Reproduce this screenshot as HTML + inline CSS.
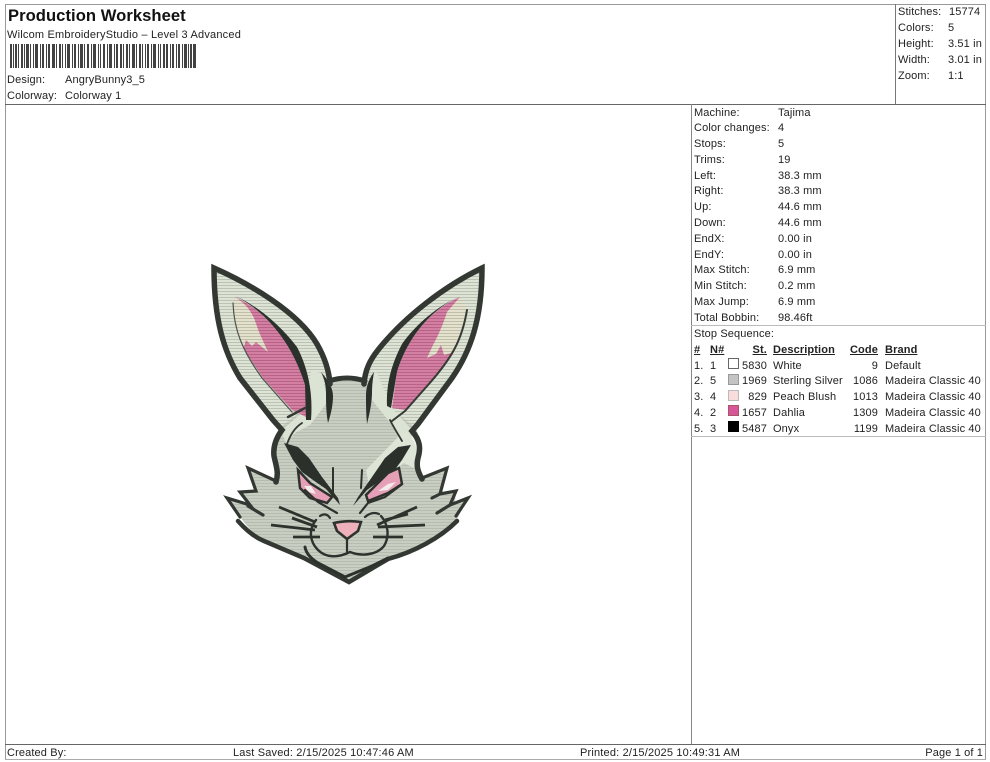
<!DOCTYPE html>
<html><head><meta charset="utf-8"><style>
html,body{margin:0;padding:0;background:#fff}
#p{position:relative;width:990px;height:762px;overflow:hidden;background:#fff;font:11px "Liberation Sans",Arial,sans-serif;color:#222}
#p span{position:absolute;white-space:nowrap;line-height:14px;letter-spacing:.13px;margin-top:1px}
.l{position:absolute;background:#777}
.b{font-weight:bold;text-decoration:underline}
.r{text-align:right}
.s{position:absolute;width:9px;height:9px;border:1px solid #666}
</style></head><body><div id="p">
<div class="l" style="left:5px;top:4px;width:980px;height:1px;background:#999"></div>
<div class="l" style="left:5px;top:4px;width:1px;height:755px;background:#999"></div>
<div class="l" style="left:985px;top:4px;width:1px;height:755px;background:#999"></div>
<div class="l" style="left:5px;top:104px;width:981px;height:1px;background:#666"></div>
<div class="l" style="left:895px;top:4px;width:1px;height:100px"></div>
<div class="l" style="left:691px;top:104px;width:1px;height:641px;background:#888"></div>
<div class="l" style="left:691px;top:325px;width:295px;height:1px;background:#bbb"></div>
<div class="l" style="left:691px;top:436px;width:295px;height:1px;background:#bbb"></div>
<div class="l" style="left:5px;top:744px;width:981px;height:1px;background:#666"></div>
<div class="l" style="left:5px;top:759px;width:981px;height:1px;background:#aaa"></div>

<span style="left:8px;top:6px;font-size:16.6px;font-weight:bold;line-height:18px;color:#111;letter-spacing:.05px">Production Worksheet</span>
<span style="left:7px;top:27px;letter-spacing:.2px">Wilcom EmbroideryStudio – Level 3 Advanced</span>
<svg style="position:absolute;left:10px;top:44px;opacity:.85" width="186" height="24"><g fill="#222">
<path d="M0 0h2v24H0zM3 0h1v24H3zM5 0h2v24H5zM8 0h1v24H8zM11 0h2v24h-2zM14 0h1v24h-1zM16 0h3v24h-3zM20 0h1v24h-1zM23 0h1v24h-1zM25 0h3v24h-3zM30 0h1v24h-1zM32 0h2v24h-2zM36 0h1v24h-1zM38 0h2v24h-2zM42 0h3v24h-3zM46 0h1v24h-1zM49 0h2v24h-2zM52 0h1v24h-1zM55 0h1v24h-1zM57 0h3v24h-3zM62 0h1v24h-1zM64 0h2v24h-2zM68 0h1v24h-1zM70 0h3v24h-3zM74 0h1v24h-1zM77 0h2v24h-2zM81 0h1v24h-1zM83 0h3v24h-3zM88 0h1v24h-1zM90 0h1v24h-1zM93 0h2v24h-2zM97 0h1v24h-1zM99 0h3v24h-3zM104 0h1v24h-1zM106 0h2v24h-2zM110 0h2v24h-2zM113 0h1v24h-1zM116 0h2v24h-2zM119 0h1v24h-1zM122 0h3v24h-3zM126 0h1v24h-1zM129 0h2v24h-2zM132 0h1v24h-1zM135 0h1v24h-1zM137 0h2v24h-2zM141 0h1v24h-1zM143 0h3v24h-3zM148 0h1v24h-1zM150 0h1v24h-1zM153 0h2v24h-2zM156 0h2v24h-2zM160 0h1v24h-1zM162 0h2v24h-2zM166 0h1v24h-1zM168 0h2v24h-2zM172 0h1v24h-1zM174 0h3v24h-3zM178 0h1v24h-1zM180 0h2v24h-2zM183 0h3v24h-3z"/></g></svg>
<span style="left:7px;top:72px">Design:</span><span style="left:65px;top:72px">AngryBunny3_5</span>
<span style="left:7px;top:88px">Colorway:</span><span style="left:65px;top:88px">Colorway 1</span>

<span style="left:898px;top:4px">Stitches:</span><span style="left:949px;top:4px">15774</span>
<span style="left:898px;top:20px">Colors:</span><span style="left:948px;top:20px">5</span>
<span style="left:898px;top:36px">Height:</span><span style="left:948px;top:36px">3.51 in</span>
<span style="left:898px;top:52px">Width:</span><span style="left:948px;top:52px">3.01 in</span>
<span style="left:898px;top:68px">Zoom:</span><span style="left:948px;top:68px">1:1</span>

<span style="left:694px;top:105px">Machine:</span><span style="left:778px;top:105px">Tajima</span>
<span style="left:694px;top:120px">Color changes:</span><span style="left:778px;top:120px">4</span>
<span style="left:694px;top:136px">Stops:</span><span style="left:778px;top:136px">5</span>
<span style="left:694px;top:152px">Trims:</span><span style="left:778px;top:152px">19</span>
<span style="left:694px;top:168px">Left:</span><span style="left:778px;top:168px">38.3 mm</span>
<span style="left:694px;top:183px">Right:</span><span style="left:778px;top:183px">38.3 mm</span>
<span style="left:694px;top:199px">Up:</span><span style="left:778px;top:199px">44.6 mm</span>
<span style="left:694px;top:215px">Down:</span><span style="left:778px;top:215px">44.6 mm</span>
<span style="left:694px;top:231px">EndX:</span><span style="left:778px;top:231px">0.00 in</span>
<span style="left:694px;top:247px">EndY:</span><span style="left:778px;top:247px">0.00 in</span>
<span style="left:694px;top:262px">Max Stitch:</span><span style="left:778px;top:262px">6.9 mm</span>
<span style="left:694px;top:278px">Min Stitch:</span><span style="left:778px;top:278px">0.2 mm</span>
<span style="left:694px;top:294px">Max Jump:</span><span style="left:778px;top:294px">6.9 mm</span>
<span style="left:694px;top:310px">Total Bobbin:</span><span style="left:778px;top:310px">98.46ft</span>
<span style="left:694px;top:326px">Stop Sequence:</span>

<span class="b" style="left:694px;top:342px">#</span><span class="b" style="left:710px;top:342px">N#</span><span class="b r" style="right:223px;top:342px">St.</span><span class="b" style="left:773px;top:342px">Description</span><span class="b r" style="right:112px;top:342px">Code</span><span class="b" style="left:885px;top:342px">Brand</span>

<span style="left:694px;top:358px">1.</span><span style="left:710px;top:358px">1</span><i class="s" style="left:728px;top:358px;background:#fff"></i><span class="r" style="right:223px;top:358px">5830</span><span style="left:773px;top:358px">White</span><span class="r" style="right:112px;top:358px">9</span><span style="left:885px;top:358px">Default</span>
<span style="left:694px;top:373px">2.</span><span style="left:710px;top:373px">5</span><i class="s" style="left:728px;top:374px;background:#c4c4c4;border-color:#999"></i><span class="r" style="right:223px;top:373px">1969</span><span style="left:773px;top:373px">Sterling Silver</span><span class="r" style="right:112px;top:373px">1086</span><span style="left:885px;top:373px">Madeira Classic 40</span>
<span style="left:694px;top:389px">3.</span><span style="left:710px;top:389px">4</span><i class="s" style="left:728px;top:390px;background:#fbdcdc;border-color:#bbb"></i><span class="r" style="right:223px;top:389px">829</span><span style="left:773px;top:389px">Peach Blush</span><span class="r" style="right:112px;top:389px">1013</span><span style="left:885px;top:389px">Madeira Classic 40</span>
<span style="left:694px;top:405px">4.</span><span style="left:710px;top:405px">2</span><i class="s" style="left:728px;top:405px;background:#d9559a;border-color:#a56"></i><span class="r" style="right:223px;top:405px">1657</span><span style="left:773px;top:405px">Dahlia</span><span class="r" style="right:112px;top:405px">1309</span><span style="left:885px;top:405px">Madeira Classic 40</span>
<span style="left:694px;top:421px">5.</span><span style="left:710px;top:421px">3</span><i class="s" style="left:728px;top:421px;background:#000;border-color:#000"></i><span class="r" style="right:223px;top:421px">5487</span><span style="left:773px;top:421px">Onyx</span><span class="r" style="right:112px;top:421px">1199</span><span style="left:885px;top:421px">Madeira Classic 40</span>

<span style="left:7px;top:745px">Created By:</span>
<span style="left:233px;top:745px;letter-spacing:.18px">Last Saved: 2/15/2025 10:47:46 AM</span>
<span style="left:580px;top:745px;letter-spacing:.18px">Printed: 2/15/2025 10:49:31 AM</span>
<span class="r" style="right:7px;top:745px">Page 1 of 1</span>

<svg style="position:absolute;left:0;top:0;filter:blur(.35px)" width="990" height="762" viewBox="0 0 990 762">
<defs>
<pattern id="st" width="4" height="3" patternUnits="userSpaceOnUse"><rect width="4" height="3" fill="#c8cec2"/><rect width="4" height="1" fill="#b6bdb0"/></pattern>
<pattern id="lt" width="4" height="3" patternUnits="userSpaceOnUse"><rect width="4" height="3" fill="#dde3d5"/><rect width="4" height="1" fill="#bcc3b4"/></pattern>
<pattern id="pk" width="4" height="3" patternUnits="userSpaceOnUse"><rect width="4" height="3" fill="#d27fa2"/><rect width="4" height="1" fill="#b8628a"/></pattern>
<pattern id="tp" width="4" height="3" patternUnits="userSpaceOnUse"><rect width="4" height="3" fill="#e4e2cf"/><rect width="4" height="1" fill="#bfbfa8"/></pattern>
</defs>
<g stroke-linejoin="miter" stroke-linecap="round">
<!-- ears -->
<path d="M273,420L240,378C224,352 214,320 214,268C250,284 298,312 317,344C325,358 329,370 330,384L332,430L290,440Z" fill="url(#lt)"/>
<path d="M420,422L452,378C470,352 482,320 482,268C445,286 405,316 378,350C370,360 365,370 364,384L362,430L405,440Z" fill="url(#lt)"/>
<!-- face fill -->
<path d="M279,428L310,405L328,380Q347,375 366,380L386,405L416,428C420,438 420,448 417,458C416,466 418,472 422,478L447,468L440,495L456,491L455,503L468,498L455,523C440,536 414,550 388,558L349,581L306,560L262,540C248,530 236,512 228,498L248,506L240,491L254,490L248,468L276,480C278,472 276,465 274,456C274,446 276,436 279,428Z" fill="url(#st)"/>
<!-- light bands -->
<path d="M311,371L322,373L331,420L326,404L310,425L295,433L286,443L281,431L305,410Z" fill="#dbe3d4"/>
<path d="M376,371L368,384L368,420L372,400L392,425L403,441L413,431L392,408Z" fill="#dbe3d4"/>
<path d="M366,470L402,433L414,436L420,450L414,468L404,463L370,490Z" fill="#dde5d6"/>
<path d="M413,438Q422,452 417,470" fill="none" stroke="#f0f4ea" stroke-width="2.5"/>
<!-- pink inner ears -->
<path d="M235,297C258,307 290,335 305,385L308,418L292,410L263,378L243,348C236,330 232,315 235,297Z" fill="url(#pk)"/>
<path d="M235,297C246,304 250,310 254,318L259,332L268,352L256,342L252,346L246,340L243,350C236,330 232,315 235,297Z" fill="url(#tp)"/>
<path d="M460,297C438,306 410,330 397,372L392,408L405,410L428,385L452,355C460,340 466,320 467,312Z" fill="url(#pk)"/>
<path d="M460,297L447,312C443,325 437,338 433,345L427,358L436,354L441,345L444,355L455,352C462,335 467,318 467,310Z" fill="url(#tp)"/>
<!-- inner ear dark lines -->
<path d="M235,296C258,307 290,335 305,385L306,420L311,420C313,395 309,370 297,347C280,325 258,306 235,296Z" fill="#2b302b"/>
<path d="M460,296C438,306 410,330 397,372L391,408L387,406C386,385 391,365 402,344C416,324 438,306 460,296Z" fill="#2b302b"/>
<path d="M233,303C234,330 242,350 262,378L292,412" fill="none" stroke="#4d544d" stroke-width="1.2"/>
<path d="M467,310C462,340 452,358 428,385L405,411L392,421" fill="none" stroke="#353a35" stroke-width="2"/>
<path d="M288,417L305,408" fill="none" stroke="#353a35" stroke-width="2.5"/>
<!-- forehead tapers -->
<path d="M321,372C328,380 333,388 333,396C333,405 331,414 328,423C326,412 326,402 326,392C326,385 324,378 321,372Z" fill="#2b302b"/>
<path d="M374,372C368,380 366,388 366,396C366,405 366,414 367,424C370,412 372,402 372,392C372,385 373,378 374,372Z" fill="#2b302b"/>
<path d="M302,423C294,428 290,436 287,444M390,420C394,428 398,434 402,441" fill="none" stroke="#333833" stroke-width="1.8"/>
<!-- outlines -->
<path d="M330,384C329,370 325,358 317,344C298,312 250,284 214,268C214,320 224,352 240,378L273,420L282,430C276,438 273,447 274,456C276,466 279,472 276,482" fill="none" stroke="#333833" stroke-width="5.5"/>
<path d="M364,384C365,370 370,360 378,350C405,316 445,286 482,268C482,320 470,352 452,378L418,424L412,431C420,440 421,448 418,458C416,466 418,472 422,479" fill="none" stroke="#333833" stroke-width="5.5"/>
<path d="M329,381Q347,375 365,381" fill="none" stroke="#333833" stroke-width="5"/>
<!-- fur -->
<path d="M276,481L248,468L256,491L240,492L250,505L227,498L240,517M263,515L248,506" fill="none" stroke="#333833" stroke-width="3.2"/>
<path d="M422,478L447,468L440,494L456,491L450,505L468,498L456,516M432,498L440,494M437,513L450,505" fill="none" stroke="#333833" stroke-width="3.2"/>
<path d="M238,521C246,530 254,537 264,541L304,558L349,582L388,559C414,552 440,538 457,521" fill="none" stroke="#333833" stroke-width="4.5"/>
<!-- eyes -->
<path d="M284,443L298,447L309,458L322,477L338,498L340,505L326,489L313,480L302,472L293,460Z" fill="#2b302b"/>
<path d="M411,445L398,447L385,458L372,477L358,497L353,506L367,490L381,480L394,471L402,460Z" fill="#2b302b"/>
<path d="M298,470L310,483L332,497L327,503L310,498L300,488Z" fill="#e5a0b8" stroke="#2d322d" stroke-width="2.5"/>
<path d="M399,468L402,484L388,493L368,501L366,495L388,473Z" fill="#e5a0b8" stroke="#2d322d" stroke-width="2.5"/>
<path d="M304,486L311,486L316,494L309,492ZM396,482L388,484L378,491L388,490Z" fill="#f5eaea"/>
<path d="M305,490L318,502L337,513M401,485L385,497L368,503L360,513" fill="none" stroke="#2d322d" stroke-width="2.2"/>
<path d="M333,468L333,495M362,470L361,488" fill="none" stroke="#2d322d" stroke-width="2"/>
<!-- nose & mouth -->
<path d="M334,523Q347,520 361,522L358,531L347,539L337,531Z" fill="#eeb0ba" stroke="#2d322d" stroke-width="2.6"/>
<path d="M347,539L347,552M320,516Q326,512 330,518M365,517Q372,511 379,514" fill="none" stroke="#2d322d" stroke-width="2.2"/>
<path d="M316,520C308,530 310,542 318,550C326,558 338,558 350,552C360,556 376,556 384,546C390,536 388,524 381,516" fill="none" stroke="#2d322d" stroke-width="2.4"/>
<!-- whiskers -->
<path d="M279,507L315,522M292,518L317,527M271,525L315,530M293,537L320,537M377,525L417,507M385,520L408,514M378,527L425,525M373,537L403,537" fill="none" stroke="#2d322d" stroke-width="2.8" stroke-linecap="butt"/>
<!-- inner chin line -->
<path d="M305,547C306,553 310,558 318,563L345,577L372,566L388,558" fill="none" stroke="#2d322d" stroke-width="3"/>
</g>
</svg>
</div></body></html>
